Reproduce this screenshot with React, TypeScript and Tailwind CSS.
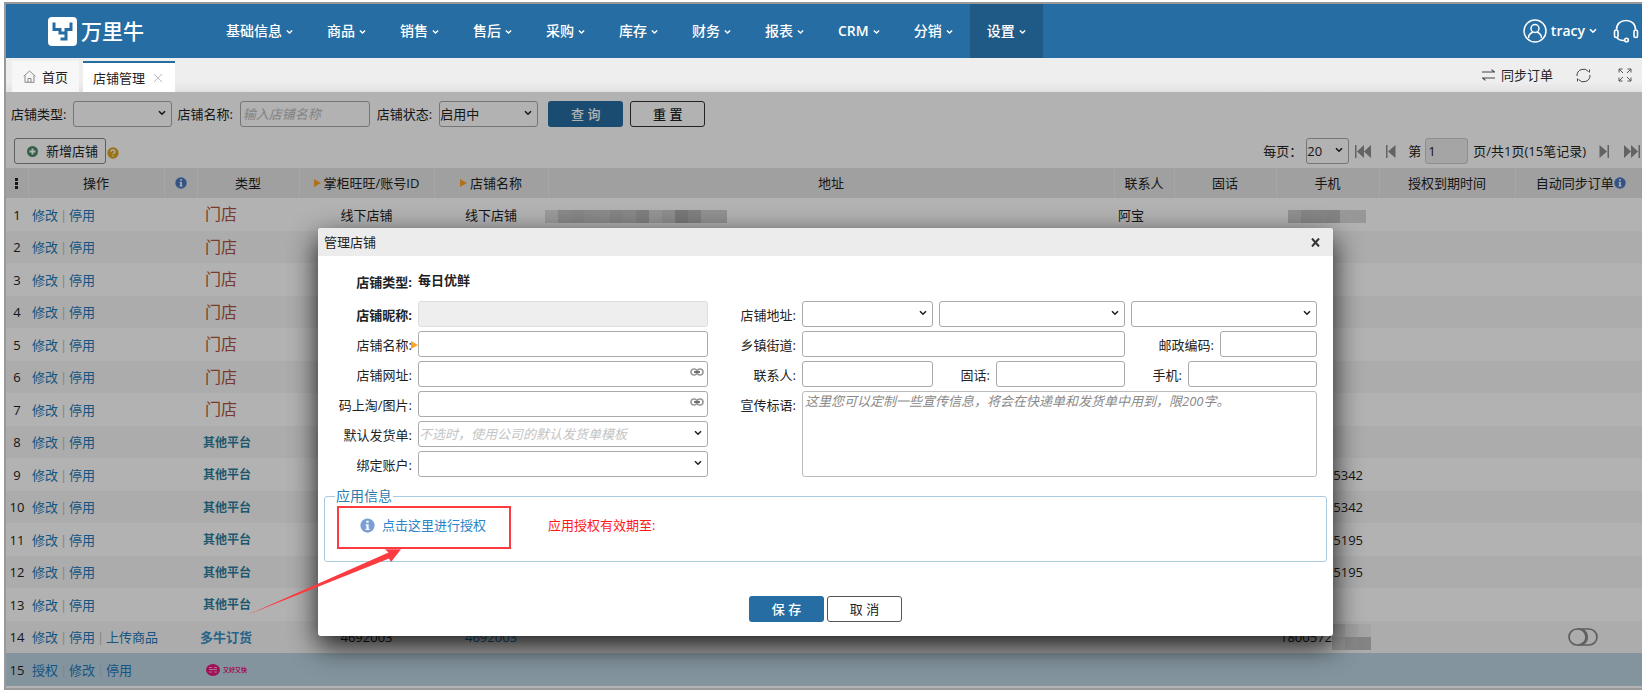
import { useState } from 'react'
import type { ReactNode } from 'react'
import clsx from 'clsx'

const NAV = ['基础信息', '商品', '销售', '售后', '采购', '库存', '财务', '报表', 'CRM', '分销', '设置']

type Kind = 'store' | 'other' | 'duoniu' | 'missfresh'

interface Shop {
  id: number
  kind: Kind
  actions: string[]
  account?: string
  name?: string
  contact?: string
  phone?: string
}

const base = ['修改', '停用']

const SHOPS: Shop[] = [
  { id: 1, kind: 'store', actions: base, account: '线下店铺', name: '线下店铺', contact: '阿宝' },
  { id: 2, kind: 'store', actions: base },
  { id: 3, kind: 'store', actions: base },
  { id: 4, kind: 'store', actions: base },
  { id: 5, kind: 'store', actions: base },
  { id: 6, kind: 'store', actions: base },
  { id: 7, kind: 'store', actions: base },
  { id: 8, kind: 'other', actions: base },
  { id: 9, kind: 'other', actions: base, phone: '5342' },
  { id: 10, kind: 'other', actions: base, phone: '5342' },
  { id: 11, kind: 'other', actions: base, phone: '5195' },
  { id: 12, kind: 'other', actions: base, phone: '5195' },
  { id: 13, kind: 'other', actions: base },
  { id: 14, kind: 'duoniu', actions: ['修改', '停用', '上传商品'], account: '4692003', name: '4692003', phone: '1800572' },
  { id: 15, kind: 'missfresh', actions: ['授权', '修改', '停用'] },
]

const ADDRESS_MASK = ['#dedede', '#c4c4c4', '#c2c2c2', '#c6c6c6', '#c8c8c8', '#bfbfbf', '#c3c3c3', '#b6b6b6', '#d6d6d6', '#cacaca', '#adadad', '#b8b8b8', '#d0d0d0', '#d0d0d0']
const PHONE_MASK = ['#cecece', '#c0c0c0', '#c0c0c0', '#bdbdbd', '#dcdcdc', '#d8d8d8']

function Chevron({ className }: { className?: string }) {
  return (
    <svg viewBox="0 0 8 6" className={clsx('h-[6px] w-2', className)} fill="none" stroke="currentColor" strokeWidth="1.6" aria-hidden>
      <path d="M1 1.2 4 4.2 7 1.2" />
    </svg>
  )
}

function InfoIcon({ size = 12, color = '#4a78c0' }: { size?: number; color?: string }) {
  return (
    <svg width={size} height={size} viewBox="0 0 12 12" className="inline-block shrink-0" aria-hidden>
      <circle cx="6" cy="6" r="5.7" fill={color} />
      <path d="M5.1 2.2h1.8v1.6H5.1zM4.6 4.9h2.3v3.7h.7v1H4.5v-1h.7V5.9h-.6z" fill="#fff" />
    </svg>
  )
}

function Marker() {
  return (
    <svg width="7" height="8" viewBox="0 0 7 8" className="inline-block shrink-0" aria-hidden>
      <path d="M0 0 7 4 0 8z" fill="#fba428" />
    </svg>
  )
}

function LinkIcon() {
  return (
    <svg width="14" height="8" viewBox="0 0 14 8" fill="none" aria-hidden>
      <rect x="1" y="1" width="6" height="6" rx="3" stroke="#999" strokeWidth="1.6" />
      <rect x="7" y="1" width="6" height="6" rx="3" stroke="#999" strokeWidth="1.6" />
      <path d="M4 4h6" stroke="#666" strokeWidth="1.8" />
    </svg>
  )
}

function Select({ id, label, className, children }: { id?: string; label?: string; className?: string; children?: ReactNode }) {
  return (
    <div className={clsx('relative', className)}>
      <select id={id} aria-label={label} className="h-[26px] w-full appearance-none rounded-[3px] border border-[#aaa] bg-white pr-5 text-inherit">
        {children}
      </select>
      <Chevron className="pointer-events-none absolute top-[9px] right-[6px] text-[#222]" />
    </div>
  )
}

function Input({ className, ...rest }: React.InputHTMLAttributes<HTMLInputElement>) {
  return (
    <input
      className={clsx('h-[26px] rounded-[3px] border border-[#aaa] px-0.5 placeholder:text-[#bbb] placeholder:italic', className)}
      {...rest}
    />
  )
}

function Logo() {
  return (
    <div className="flex items-center gap-1">
      <svg width="29" height="29" viewBox="0 0 29 29" aria-hidden>
        <rect width="29" height="29" rx="4" fill="#fff" />
        <path d="M4.500 7h3M6 5.500V12.500h6v3.500h5M24.500 7h-3M23 5.500v7h-5V22h-5.500" fill="none" stroke="#266da3" strokeWidth="3" />
      </svg>
      <span className="text-[21px] leading-7 font-medium text-white">万里牛</span>
    </div>
  )
}

function Header() {
  return (
    <header className="flex h-[54px] items-stretch bg-[#266da3] text-white">
      <div className="flex w-[203px] items-center pl-[42px]">
        <Logo />
      </div>
      <nav className="flex">
        {NAV.map(item => (
          <a
            key={item}
            href="#"
            className={clsx(
              'flex items-center gap-1 px-[17px] text-[14px]',
              item === 'CRM' ? 'font-semibold' : 'font-medium',
              item === '设置' && 'bg-[#1e5a85]',
            )}
          >
            {item}
            <Chevron className="mt-px w-[7px]" />
          </a>
        ))}
      </nav>
      <div className="ml-auto flex items-center pr-[3px]">
        <button className="flex items-center text-[14px] font-semibold">
          <svg width="24" height="24" viewBox="0 0 24 24" fill="none" stroke="currentColor" strokeWidth="1.500" className="mr-1" aria-hidden>
            <circle cx="12" cy="12" r="11" />
            <circle cx="12" cy="9.500" r="4" />
            <path d="M5.500 19c0-3.500 2-5 4.500-6M18.500 19c0-3.500-2-5-4.500-6" />
          </svg>
          tracy
          <Chevron className="ml-1" />
        </button>
        <button className="ml-4" aria-label="客服">
          <svg width="26" height="24" viewBox="0 0 26 24" fill="none" stroke="currentColor" strokeWidth="1.600" aria-hidden>
            <path d="M3.500 10.500C3.500 5 7.500 1.500 13 1.500s9.500 3.500 9.500 9" />
            <rect x="1.500" y="11" width="3.500" height="7.500" rx="1.700" />
            <rect x="21" y="11" width="3.500" height="7.500" rx="1.700" />
            <path d="M4 18.500c1 2.200 3.500 3 7 3" />
            <circle cx="13.500" cy="21" r="1.800" />
          </svg>
        </button>
      </div>
    </header>
  )
}

function TabBar() {
  return (
    <div className="flex h-[34px] items-end bg-linear-to-b from-[#eee] from-70% to-[#e2e2e2] pl-[6px] text-[#222]">
      <a href="#" className="flex h-[31px] items-center gap-[6px] bg-[#f7f7f7] px-[11px]">
        <svg width="13" height="13" viewBox="0 0 13 13" fill="none" stroke="#888" aria-hidden>
          <path d="M.7 6.300 6.500 1l5.800 5.300M2 5.500v6.800h9V5.500M5 12.300V8.500h3v3.800" />
        </svg>
        首页
      </a>
      <div className="ml-1 flex h-[31px] items-center gap-2 border-t-2 border-[#266da3] bg-white pr-3 pl-[10px]">
        店铺管理
        <button aria-label="关闭标签">
          <svg width="10" height="10" viewBox="0 0 10 10" stroke="#bbb" aria-hidden>
            <path d="M1 1l8 8M9 1 1 9" />
          </svg>
        </button>
      </div>
      <div className="ml-auto flex h-[34px] items-center pr-[10px]">
        <button className="flex items-center gap-[6px]">
          <svg width="13" height="12" viewBox="0 0 13 12" fill="none" stroke="#444" strokeWidth="1.200" aria-hidden>
            <path d="M0 3h12.500L9.500.6M13 9H.5l3 2.400" />
          </svg>
          同步订单
        </button>
        <button className="ml-[23px]" aria-label="刷新">
          <svg width="15" height="15" viewBox="0 0 15 15" fill="none" stroke="#444" aria-hidden>
            <path d="M1 8a6.500 6.500 0 0 1 11.500-4.500M14 7a6.500 6.500 0 0 1-11.500 4.500M13.500 1.500v3M1.500 13.500v-3" />
          </svg>
        </button>
        <button className="ml-[27px]" aria-label="全屏">
          <svg width="14" height="14" viewBox="0 0 14 14" fill="none" stroke="#555" aria-hidden>
            <path d="M1 4.500V1h3.500M1 1l4 4M9.500 1H13v3.500M13 1 9 5M1 9.500V13h3.500M1 13l4-4M13 9.500V13H9.500M13 13 9 9" />
          </svg>
        </button>
      </div>
    </div>
  )
}

function Filters() {
  return (
    <div className="flex items-center pt-[9px] pl-[5px]">
      <label htmlFor="f-type" className="mr-[7px]">店铺类型:</label>
      <Select id="f-type" className="w-[99px]" />
      <label htmlFor="f-name" className="mr-[7px] ml-[5px]">店铺名称:</label>
      <Input id="f-name" placeholder="输入店铺名称" className="w-[130px]" />
      <label htmlFor="f-state" className="mr-[7px] ml-[7px]">店铺状态:</label>
      <Select id="f-state" className="w-[99px]">
        <option>启用中</option>
      </Select>
      <button className="ml-[10px] h-[26px] w-[75px] rounded-[3px] bg-[#266da3] font-medium text-white">查 询</button>
      <button className="ml-[7px] h-[26px] w-[75px] rounded-[3px] border border-[#333] font-medium">重 置</button>
    </div>
  )
}

function PageIcon({ double, flip, label }: { double?: boolean; flip?: boolean; label: string }) {
  return (
    <button aria-label={label} className={clsx(flip && 'rotate-180')}>
      <svg width={double ? 16 : 10} height="13" viewBox={double ? '0 0 16 13' : '0 0 10 13'} fill="#8e8e8e" aria-hidden>
        <path d={double ? 'M0 0h1.500v13H0zM9 0v13L2 6.500zM16 0v13L9 6.500z' : 'M0 0h1.500v13H0zM9.500 0v13L2 6.500z'} />
      </svg>
    </button>
  )
}

function Toolbar() {
  return (
    <div className="flex items-center pt-[11px] pb-1 pl-2">
      <button className="flex h-[26px] items-center gap-2 rounded-[3px] border border-[#888] pr-[7px] pl-3">
        <svg width="11" height="11" viewBox="0 0 11 11" aria-hidden>
          <circle cx="5.500" cy="5.500" r="5.500" fill="#4a8c68" />
          <path d="M5.500 2.500v6M2.500 5.500h6" stroke="#fff" strokeWidth="1.800" />
        </svg>
        新增店铺
      </button>
      <svg width="12" height="12" viewBox="0 0 12 12" className="mt-[3px] ml-px" aria-hidden>
        <circle cx="6" cy="6" r="5.700" fill="#dba520" />
        <path d="M4 4.800C4 2.400 8 2.400 8 4.700c0 1.300-2 1.300-2 2.500M6 8.200v1.400" fill="none" stroke="#fff" strokeWidth="1.300" />
      </svg>
      <div className="ml-auto flex items-center pr-[2px]">
        <label htmlFor="p-size" className="mr-1">每页：</label>
        <Select id="p-size" className="mr-[6px] w-[43px]">
          <option>20</option>
        </Select>
        <PageIcon double label="首页" />
        <span className="w-[15px]" />
        <PageIcon label="上一页" />
        <label htmlFor="p-no" className="mr-1 ml-3">第</label>
        <Input id="p-no" defaultValue="1" className="w-[43px] border-[#ccc] bg-[#ededed]" />
        <span className="mr-[13px] ml-[5px]">页/共1页(15笔记录)</span>
        <PageIcon flip label="下一页" />
        <span className="w-[15px]" />
        <PageIcon flip double label="末页" />
      </div>
    </div>
  )
}

function KindLabel({ kind }: { kind: Kind }) {
  if (kind === 'store') return <span className="pl-[3px] text-[16px] text-[#ad5440]">门店</span>
  if (kind === 'other') return <span className="pl-px text-[12px] font-bold text-[#2c7d9e]">其他平台</span>
  if (kind === 'duoniu') return <span className="-ml-0.5 text-[13px] font-bold text-[#3a8fc4]">多牛订货</span>
  return (
    <span className="flex items-center gap-[3px] pl-1">
      <svg width="14" height="12" viewBox="0 0 14 12" aria-hidden>
        <ellipse cx="7" cy="6" rx="7" ry="6" fill="#e5177d" />
        <path d="M3 3.500h3M8 3.500h3M3 5.500h8M3 8h3M8 8h3" stroke="#f7a8cf" />
      </svg>
      <span className="text-[6px] leading-3 font-bold text-[#e5177d]">又好又快</span>
    </span>
  )
}

function Mosaic({ colors }: { colors: string[] }) {
  return (
    <span className="flex" aria-hidden>
      {colors.map((c, i) => (
        <span key={i} className="h-[13px] w-[13px]" style={{ background: c }} />
      ))}
    </span>
  )
}

function Row({ shop }: { shop: Shop }) {
  const selected = shop.id === 15
  return (
    <tr className={clsx('h-[33px] even:h-8', selected ? 'bg-[#bcd5e3]' : 'even:bg-[#f7f7f7]')}>
      <td className="text-center">{shop.id}</td>
      <td colSpan={2} className="pl-1">
        {shop.actions.map((a, i) => (
          <span key={a}>
            {i > 0 && <span className={clsx('inline-block w-[11px] text-center', selected ? 'text-[#a9c3d3]' : 'text-[#bbb]')}>|</span>}
            <a href="#" className="text-[#2079b9]">{a}</a>
          </span>
        ))}
      </td>
      <td className="pl-[5px]"><KindLabel kind={shop.kind} /></td>
      <td className="text-center">{shop.account}</td>
      <td className={clsx('text-center', shop.id === 14 && 'text-[#2079b9]')}>{shop.name}</td>
      <td>{shop.id === 1 && <span className="-ml-[3px] flex pt-1"><Mosaic colors={ADDRESS_MASK} /></span>}</td>
      <td className="pl-1">{shop.contact}</td>
      <td />
      <td className={clsx(shop.id === 14 ? 'pl-1' : 'pr-4 text-right')}>
        {shop.id === 1 && <span className="flex pt-1 pl-3"><Mosaic colors={PHONE_MASK} /></span>}
        {shop.id === 14 ? (
          <span className="flex items-center">
            {shop.phone}
            <span className="flex flex-col">
              <Mosaic colors={['#d8d8d8', '#e6e6e6', '#ededed']} />
              <Mosaic colors={['#cfcfcf', '#c2c2c2', '#bdbdbd']} />
            </span>
          </span>
        ) : shop.phone}
      </td>
      <td />
      <td className="pl-[9px]">
        {shop.id === 14 && (
          <button aria-label="自动同步订单" className="mx-auto block">
            <svg width="30" height="18" viewBox="0 0 30 18" fill="none" stroke="#888" strokeWidth="1.700" aria-hidden>
              <rect x="1" y="1" width="28" height="16" rx="8" />
              <path d="M10 1a8 8 0 0 1 0 16" />
              <path d="M14 1.500a8 8 0 0 1 0 15" />
            </svg>
          </button>
        )}
      </td>
    </tr>
  )
}

function ShopTable() {
  const th = 'border-r border-[#f0f0f0] font-normal'
  return (
    <table className="w-full table-fixed">
      <colgroup>
        <col className="w-[22px]" />
        <col className="w-[136px]" />
        <col className="w-[33px]" />
        <col className="w-[102px]" />
        <col className="w-[135px]" />
        <col className="w-[114px]" />
        <col />
        <col className="w-[60px]" />
        <col className="w-[102px]" />
        <col className="w-[103px]" />
        <col className="w-[136px]" />
        <col className="w-[127px]" />
      </colgroup>
      <thead>
        <tr className="h-[30px] bg-[#e6e6e6]">
          <th className={th}>
            <svg width="3" height="11" viewBox="0 0 3 11" className="mx-auto" aria-hidden>
              <path d="M0 0h3v3H0zM0 4h3v3H0zM0 8h3v3H0z" fill="#222" />
            </svg>
          </th>
          <th className={th}>操作</th>
          <th className={th}><span className="flex justify-center"><InfoIcon /></span></th>
          <th className={th}>类型</th>
          <th className={th}><span className="flex items-center justify-center gap-[3px]"><Marker />掌柜旺旺/账号ID</span></th>
          <th className={th}><span className="flex items-center justify-center gap-[3px]"><Marker />店铺名称</span></th>
          <th className={th}>地址</th>
          <th className={th}>联系人</th>
          <th className={th}>固话</th>
          <th className={th}>手机</th>
          <th className={th}>授权到期时间</th>
          <th className="font-normal"><span className="flex items-center justify-center pl-1">自动同步订单<InfoIcon /></span></th>
        </tr>
      </thead>
      <tbody>
        {SHOPS.map(shop => <Row key={shop.id} shop={shop} />)}
      </tbody>
    </table>
  )
}

function Label({ htmlFor, className, children }: { htmlFor?: string; className?: string; children: ReactNode }) {
  return <label htmlFor={htmlFor} className={clsx('shrink-0 pt-1 text-right leading-5', className)}>{children}</label>
}

function LinkInput({ id }: { id: string }) {
  return (
    <div className="relative">
      <Input id={id} className="w-full" />
      <span className="absolute top-[7px] right-1"><LinkIcon /></span>
    </div>
  )
}

function ShopDialog({ onClose }: { onClose: () => void }) {
  return (
    <div role="dialog" aria-label="管理店铺" className="relative w-[1015px] max-w-full rounded-[3px] bg-white shadow-[0_10px_28px_rgba(0,0,0,0.85)]">
      <div className="flex h-[28px] items-center justify-between rounded-t-[3px] bg-[#ececec] pr-[13px] pl-[6px]">
        <h2>管理店铺</h2>
        <button onClick={onClose} aria-label="关闭">
          <svg width="9" height="9" viewBox="0 0 9 9" stroke="#333" strokeWidth="2" aria-hidden>
            <path d="M1 .5l7 8M8 .5l-7 8" />
          </svg>
        </button>
      </div>

      <div className="flex pt-[15px]">
        <div className="grid w-[390px] grid-cols-[94px_1fr] gap-x-[6px] gap-y-1">
          <span className="h-[26px] pt-[2px] text-right font-bold">店铺类型:</span>
          <strong>每日优鲜</strong>
          <Label htmlFor="nick" className="font-bold">店铺昵称:</Label>
          <Input id="nick" disabled className="border-[#ddd] bg-[#eee]" />
          <Label htmlFor="name" className="relative">
            店铺名称:
            <span className="absolute top-[2px] -right-[6px]"><Marker /></span>
          </Label>
          <Input id="name" />
          <Label htmlFor="url">店铺网址:</Label>
          <LinkInput id="url" />
          <Label htmlFor="pic">码上淘/图片:</Label>
          <LinkInput id="pic" />
          <Label htmlFor="tpl">默认发货单:</Label>
          <Select id="tpl" className="text-[#c4c4c4] italic">
            <option>不选时，使用公司的默认发货单模板</option>
          </Select>
          <Label htmlFor="acct">绑定账户:</Label>
          <Select id="acct" />
        </div>

        <div className="flex flex-1 flex-col gap-1 pt-[30px] pr-4">
          <div className="flex gap-[6px]">
            <Label htmlFor="prov" className="w-[88px]">店铺地址:</Label>
            <Select id="prov" className="w-[131px]" />
            <Select label="城市" className="flex-1" />
            <Select label="区县" className="flex-1" />
          </div>
          <div className="flex gap-[6px]">
            <Label htmlFor="street" className="w-[88px]">乡镇街道:</Label>
            <Input id="street" className="w-[323px]" />
            <Label htmlFor="zip" className="ml-auto">邮政编码:</Label>
            <Input id="zip" className="w-[97px]" />
          </div>
          <div className="flex gap-[6px]">
            <Label htmlFor="contact" className="w-[88px]">联系人:</Label>
            <Input id="contact" className="w-[131px]" />
            <Label htmlFor="tel" className="ml-auto">固话:</Label>
            <Input id="tel" className="w-[129px]" />
            <Label htmlFor="mobile" className="ml-auto">手机:</Label>
            <Input id="mobile" className="w-[129px]" />
          </div>
          <div className="flex gap-[6px]">
            <Label htmlFor="slogan" className="w-[88px]">宣传标语:</Label>
            <textarea
              id="slogan"
              className="h-[86px] flex-1 resize-none rounded-[3px] border border-[#bbb] px-0.5 leading-[18px] placeholder:text-[#8a8a8a] placeholder:italic"
              placeholder="这里您可以定制一些宣传信息，将会在快递单和发货单中用到，限200字。"
            />
          </div>
        </div>
      </div>

      <fieldset className="mx-[6px] mt-[9px] h-[76px] rounded-[3px] border border-[#a9cbe0] pl-[10px]">
        <legend className="px-px text-[14px] leading-5 text-[#2e7cab]">应用信息</legend>
        <div className="ml-0.5 flex">
          <div className="flex h-[43px] w-[174px] border-2 border-[#fb3b40] pt-[7px] pl-[21px]">
            <a href="#" className="flex h-5 items-center gap-[7px] text-[#2a84c8]">
              <InfoIcon size={15} color="#7b9fd4" />
              点击这里进行授权
            </a>
          </div>
          <span className="mt-[9px] ml-[37px] leading-5 text-[#ff1a1a]">应用授权有效期至:</span>
        </div>
      </fieldset>

      <div className="flex justify-center gap-[3px] pt-[34px] pb-[14px]">
        <button className="h-[26px] w-[75px] rounded-[3px] bg-[#266da3] font-medium text-white">保 存</button>
        <button onClick={onClose} className="h-[26px] w-[75px] rounded-[3px] border border-[#555]">取 消</button>
      </div>

      <svg className="pointer-events-none absolute top-[320px] -left-[72px]" width="156" height="68" viewBox="0 0 156 68" aria-hidden>
        <path d="M1 67 142.500 4.500 139 1.200 155 1.300 145 14 143 10.500z" fill="#fb3b40" />
      </svg>
    </div>
  )
}

export default function App() {
  const [open, setOpen] = useState(true)

  return (
    <div className="bg-white pt-[2px] pb-1 pl-1 font-['Open_Sans','Noto_Sans_CJK_SC',sans-serif] text-[13px] leading-[18px] text-[#222]">
      <div className="border-y-2 border-l-2 border-[#999]">
        <Header />
        <TabBar />
        <main className="relative">
          <Filters />
          <Toolbar />
          <ShopTable />
          <div className="h-[2px]" />
          {open && (
            <div className="absolute inset-0 flex items-start justify-center bg-black/30 pt-[136px] pl-[3px]">
              <ShopDialog onClose={() => setOpen(false)} />
            </div>
          )}
        </main>
      </div>
    </div>
  )
}
